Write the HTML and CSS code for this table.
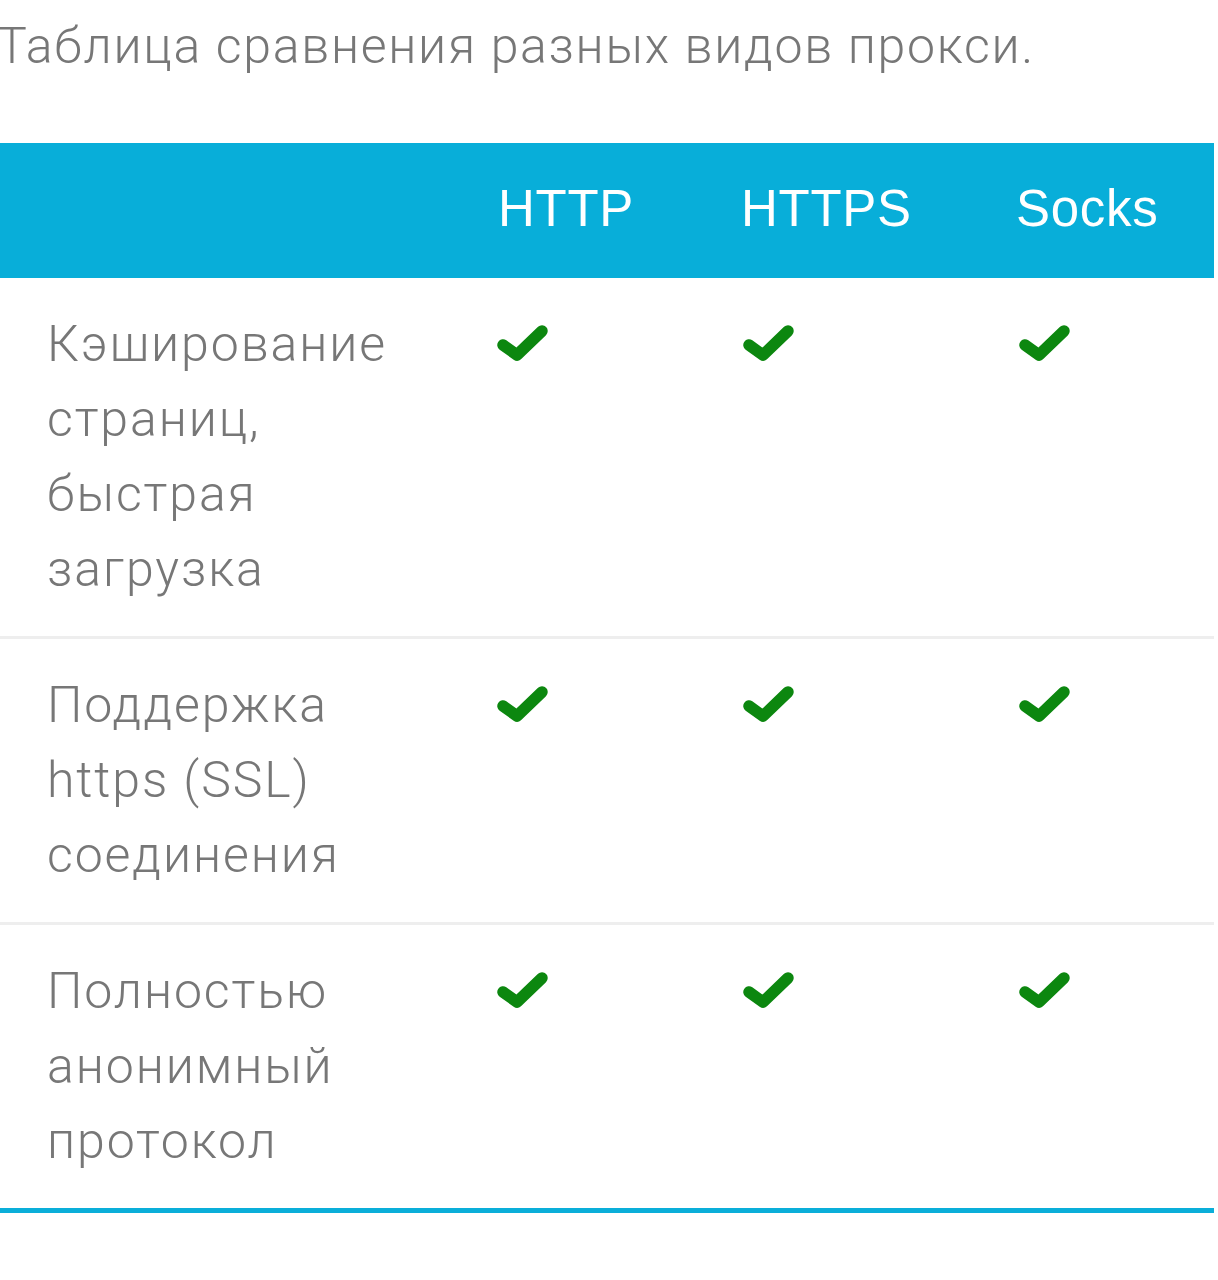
FILE: index.html
```html
<!DOCTYPE html>
<html lang="ru">
<head>
<meta charset="utf-8">
<title>Таблица сравнения</title>
<link rel="stylesheet" href="styles.css">
</head>
<body>
<p class="caption">Таблица сравнения разных видов прокси.</p>
<table class="compare">
  <colgroup>
    <col class="c-label"><col class="c-http"><col class="c-https"><col class="c-socks">
  </colgroup>
  <thead>
    <tr><th></th><th>HTTP</th><th>HTTPS</th><th>Socks</th></tr>
  </thead>
  <tbody>
    <tr>
      <td class="label">Кэширование страниц, быстрая загрузка</td>
      <td><svg class="check" viewBox="0 0 56 40"><polyline points="7,20 21,30 46,6"/></svg></td>
      <td><svg class="check" viewBox="0 0 56 40"><polyline points="7,20 21,30 46,6"/></svg></td>
      <td><svg class="check" viewBox="0 0 56 40"><polyline points="7,20 21,30 46,6"/></svg></td>
    </tr>
    <tr>
      <td class="label">Поддержка https (SSL) соединения</td>
      <td><svg class="check" viewBox="0 0 56 40"><polyline points="7,20 21,30 46,6"/></svg></td>
      <td><svg class="check" viewBox="0 0 56 40"><polyline points="7,20 21,30 46,6"/></svg></td>
      <td><svg class="check" viewBox="0 0 56 40"><polyline points="7,20 21,30 46,6"/></svg></td>
    </tr>
    <tr class="last">
      <td class="label">Полностью анонимный протокол</td>
      <td><svg class="check" viewBox="0 0 56 40"><polyline points="7,20 21,30 46,6"/></svg></td>
      <td><svg class="check" viewBox="0 0 56 40"><polyline points="7,20 21,30 46,6"/></svg></td>
      <td><svg class="check" viewBox="0 0 56 40"><polyline points="7,20 21,30 46,6"/></svg></td>
    </tr>
  </tbody>
</table>
</body>
</html>
```

FILE: styles.css
```css
html, body {
  margin: 0;
  padding: 0;
  background: #ffffff;
}

body {
  font-family: Roboto, "Noto Sans", "Liberation Sans", sans-serif;
  font-weight: 300;
  color: #777777;
}

.caption {
  margin: 9px 0 0 -3px;
  font-size: 50px;
  line-height: 75px;
  letter-spacing: 1.7px;
  white-space: nowrap;
}

.compare {
  margin-top: 59px;
  width: 1214px;
  border-collapse: collapse;
  table-layout: fixed;
}

.c-label { width: 451px; }
.c-http { width: 243px; }
.c-https { width: 275px; }
.c-socks { width: 245px; }

.compare th {
  background: #08aed9;
  color: #ffffff;
  font-family: "Liberation Sans", Arial, sans-serif;
  font-weight: 400;
  font-size: 51px;
  line-height: 59px;
  letter-spacing: 0.7px;
  text-align: left;
  padding: 36px 0 40px 47px;
}

.compare td {
  vertical-align: top;
  padding: 29px 0 29px 47px;
  font-size: 50px;
  line-height: 75px;
  letter-spacing: 1.9px;
  border-bottom: 3px solid #eeeeee;
}

.compare tr.last td {
  border-bottom: 5px solid #0aaed9;
}

.compare td.label {
  padding-right: 20px;
}

.check {
  display: block;
  width: 56px;
  height: 40px;
  margin-top: 18px;
  margin-left: -2px;
}

.compare td:nth-child(3) .check {
  margin-left: 1px;
}

.compare td:nth-child(4) .check {
  margin-left: 2px;
}

.check polyline {
  fill: none;
  stroke: #0c870f;
  stroke-width: 11.5;
  stroke-linecap: round;
  stroke-linejoin: round;
}
```
